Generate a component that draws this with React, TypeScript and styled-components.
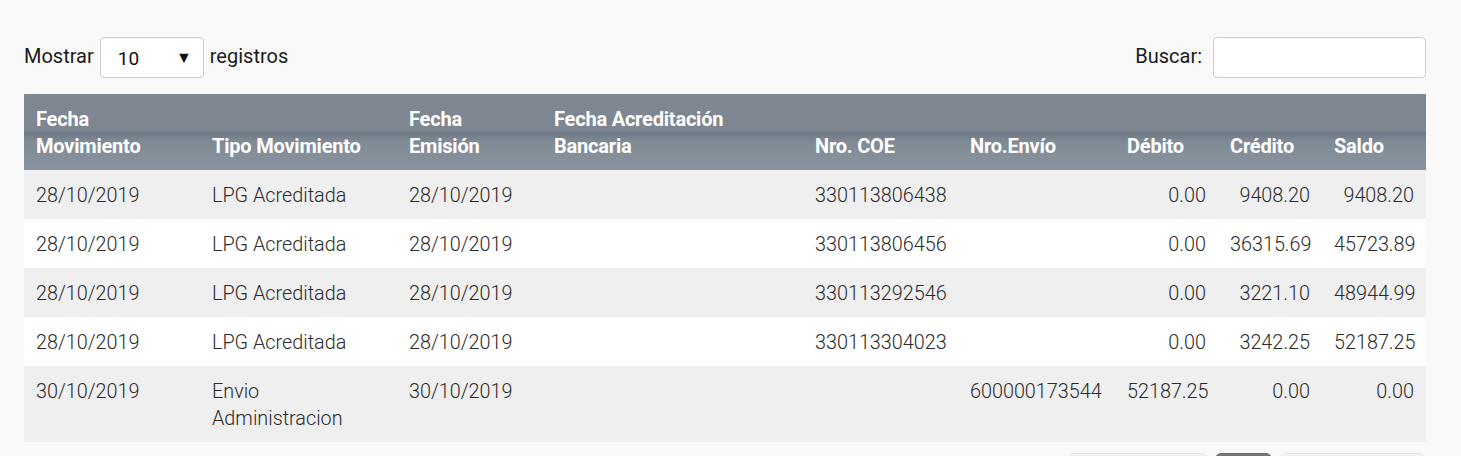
import React from "react";
import styled, { createGlobalStyle } from "styled-components";

const GlobalStyle = createGlobalStyle`
  body {
    margin: 0;
    background: #f9f9f9;
    font-family: Roboto, "Liberation Sans", sans-serif;
    color: #333;
  }
`;

const Wrapper = styled.div`
  padding: 37px 35px 0 24px;
`;

const TopBar = styled.div`
  display: flex;
  justify-content: space-between;
  align-items: center;
  height: 41px;
  margin-bottom: 16px;
`;

const Label = styled.label<{ $gap: number }>`
  display: flex;
  align-items: center;
  gap: ${(p) => p.$gap}px;
  font-size: 20px;
  font-weight: 400;
  color: #1a1a1a;
  padding-bottom: 3px;
`;

const SelectBox = styled.div`
  display: flex;
  align-items: center;
  justify-content: space-between;
  box-sizing: border-box;
  width: 104px;
  height: 41px;
  margin-top: 3px;
  padding: 2px 11px 0 17px;
  background: #fff;
  border: 1px solid #ccc;
  border-radius: 4px;
  font-size: 19px;
  color: #111;
`;

const Arrow = styled.span`
  font-size: 16px;
  margin-top: -3px;
  color: #111;
`;

const SearchInput = styled.input`
  box-sizing: border-box;
  width: 213px;
  height: 41px;
  margin-top: 3px;
  border: 1px solid #ccc;
  border-radius: 4px;
  background: #fff;
  font-size: 18px;
  padding: 0 10px;
`;

const Table = styled.table`
  width: 100%;
  border-collapse: collapse;
  table-layout: fixed;
`;

const HeadRow = styled.tr`
  background: linear-gradient(
    to bottom,
    #7f8892 0%,
    #7e8791 49%,
    #6c7783 50%,
    #808a95 62%,
    #8a949e 100%
  );
`;

const Th = styled.th`
  padding: 12px 12px 10px;
  text-align: left;
  vertical-align: bottom;
  font-size: 20px;
  line-height: 27px;
  font-weight: 700;
  color: #fff;
  letter-spacing: -0.2px;
`;

const Row = styled.tr`
  background: #fff;
  &:nth-child(odd) {
    background: #efefef;
  }
`;

const Td = styled.td<{ $right?: boolean }>`
  padding: 12px 12px 10px;
  vertical-align: top;
  text-align: ${(p) => (p.$right ? "right" : "left")};
  font-size: 19.8px;
  line-height: 27px;
  font-weight: 300;
  color: #2b2b2b;
`;

const Pager = styled.div`
  display: flex;
  justify-content: flex-end;
  gap: 8px;
  margin-top: 11px;
  padding-right: 2px;
`;

const PageButton = styled.button<{ $active?: boolean; $w: number }>`
  box-sizing: border-box;
  width: ${(p) => p.$w}px;
  height: 40px;
  border: 1px solid ${(p) => (p.$active ? "#6f6f6f" : "#e6e3dc")};
  border-radius: 6px;
  background: ${(p) => (p.$active ? "#777" : "#f4f2ee")};
  color: ${(p) => (p.$active ? "#fff" : "#555")};
  font-family: inherit;
  font-size: 17px;
`;

const widths = [176, 197, 145, 261, 155, 157, 103, 104, 104];

const rows = [
  ["28/10/2019", "LPG Acreditada", "28/10/2019", "", "330113806438", "", "0.00", "9408.20", "9408.20"],
  ["28/10/2019", "LPG Acreditada", "28/10/2019", "", "330113806456", "", "0.00", "36315.69", "45723.89"],
  ["28/10/2019", "LPG Acreditada", "28/10/2019", "", "330113292546", "", "0.00", "3221.10", "48944.99"],
  ["28/10/2019", "LPG Acreditada", "28/10/2019", "", "330113304023", "", "0.00", "3242.25", "52187.25"],
  ["30/10/2019", "Envio Administracion", "30/10/2019", "", "", "600000173544", "52187.25", "0.00", "0.00"],
];

export default function App() {
  return (
    <Wrapper>
      <GlobalStyle />
      <TopBar>
        <Label $gap={6}>
          Mostrar
          <SelectBox>
            <span>10</span>
            <Arrow>▼</Arrow>
          </SelectBox>
          registros
        </Label>
        <Label $gap={11}>
          Buscar:
          <SearchInput type="text" />
        </Label>
      </TopBar>

      <Table>
        <colgroup>
          {widths.map((w, i) => (
            <col key={i} style={{ width: w }} />
          ))}
        </colgroup>
        <thead>
          <HeadRow>
            <Th>
              Fecha
              <br />
              Movimiento
            </Th>
            <Th>Tipo Movimiento</Th>
            <Th>
              Fecha
              <br />
              Emisión
            </Th>
            <Th>
              Fecha Acreditación
              <br />
              Bancaria
            </Th>
            <Th>Nro. COE</Th>
            <Th>Nro.Envío</Th>
            <Th>Débito</Th>
            <Th>Crédito</Th>
            <Th>Saldo</Th>
          </HeadRow>
        </thead>
        <tbody>
          {rows.map((r, i) => (
            <Row key={i}>
              {r.map((c, j) => (
                <Td key={j} $right={j >= 6}>
                  {j === 1 && c === "Envio Administracion" ? (
                    <>
                      Envio
                      <br />
                      Administracion
                    </>
                  ) : (
                    c
                  )}
                </Td>
              ))}
            </Row>
          ))}
        </tbody>
      </Table>

      <Pager>
        <PageButton $w={139}>Anterior</PageButton>
        <PageButton $w={57} $active>
          1
        </PageButton>
        <PageButton $w={144}>Siguiente</PageButton>
      </Pager>
    </Wrapper>
  );
}
